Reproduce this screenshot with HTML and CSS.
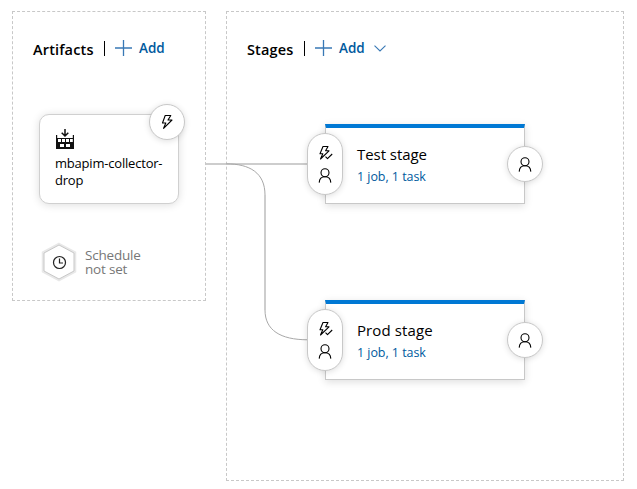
FILE: index.html
```html
<!DOCTYPE html>
<html lang="en">
<head>
<meta charset="utf-8">
<title>Release pipeline</title>
<link rel="stylesheet" href="styles.css">
</head>
<body>
<svg class="symbols" width="0" height="0" aria-hidden="true">
  <symbol id="plus" viewBox="0 0 17 17"><path d="M8.500 0v16M0 8h17" fill="none" stroke="currentColor" stroke-width="1.300"/></symbol>
  <symbol id="bolt" viewBox="0 0 14 16"><path d="M5.200 1.500h5.600L8 6h4L3.600 14.300 5.800 9H2.500z" fill="none" stroke="currentColor" stroke-width="1.100" stroke-linejoin="round"/></symbol>
  <symbol id="bolt-check" viewBox="0 0 15 16"><path d="M5 1.500h5L7.600 5.800H11L2.500 14 4.800 8.800H2zM7.500 11.700l2 2 4.700-4.700" fill="none" stroke="currentColor" stroke-width="1.100" stroke-linejoin="round"/></symbol>
  <symbol id="person" viewBox="0 0 14 15"><circle cx="7" cy="4.700" r="4" fill="none" stroke="currentColor" stroke-width="1.100"/><path d="M1.200 14.600C1.400 11 3.700 8.800 7 8.800s5.600 2.200 5.800 5.800" fill="none" stroke="currentColor" stroke-width="1.100"/></symbol>
</svg>
<main class="pipeline">
  <section class="panel artifacts">
    <header class="panel-header">
      <h2>Artifacts</h2><span class="divider"></span>
      <a class="add"><svg class="plus"><use href="#plus"/></svg><span>Add</span></a>
    </header>
    <article class="artifact">
      <svg class="build" viewBox="0 0 18 20"><path d="M9 0v7M5.700 3.700 9 7l3.300-3.300" fill="none" stroke="#111" stroke-width="1.500"/><path fill="#111" fill-rule="evenodd" d="M0 6h1.200v3h15.600V6H18v14H0zM1.200 10v3h15.600v-3zM4 15v3h4v-3zm6 0v3h4v-3z"/><path fill="#111" d="M5 10h1v3H5zM9 10h1v3H9zM13 10h1v3h-1zM1 10h1v3H1z"/></svg>
      <div class="artifact-name">mbapim-collector-<br>drop</div>
      <span class="round trigger"><svg class="bolt"><use href="#bolt"/></svg></span>
    </article>
    <div class="schedule">
      <svg class="hexagon" viewBox="0 0 36 40"><path d="M18 2 34 10.500v19L18 38 2 29.500v-19z" fill="#fff" stroke="#e8e8e8" stroke-width="2.500"/><path d="M18 3 33 11v18L18 37 3 29V11z" fill="#fff" stroke="#c8c8c8"/><circle cx="18.500" cy="20.500" r="6" fill="none" stroke="#222" stroke-width="1.200"/><path d="M18.500 16.500V21H22" fill="none" stroke="#222" stroke-width="1.200"/></svg>
      <div class="schedule-text">Schedule<br>not set</div>
    </div>
  </section>
  <section class="panel stages">
    <header class="panel-header">
      <h2>Stages</h2><span class="divider"></span>
      <a class="add"><svg class="plus"><use href="#plus"/></svg><span>Add</span><svg class="chevron" viewBox="0 0 12 7"><path d="m.5.7 5.500 5.300L11.500.7" fill="none" stroke="currentColor" stroke-width="1.100"/></svg></a>
    </header>
    <div class="stage-list">
      <article class="stage">
        <h3>Test stage</h3><a class="tasks">1 job, 1 task</a>
        <span class="pre"><svg class="bolt-check"><use href="#bolt-check"/></svg><svg class="person"><use href="#person"/></svg></span>
        <span class="round post"><svg class="person"><use href="#person"/></svg></span>
      </article>
      <article class="stage">
        <h3 class="prod">Prod stage</h3><a class="tasks">1 job, 1 task</a>
        <span class="pre"><svg class="bolt-check"><use href="#bolt-check"/></svg><svg class="person"><use href="#person"/></svg></span>
        <span class="round post"><svg class="person"><use href="#person"/></svg></span>
      </article>
    </div>
  </section>
  <svg class="connectors" viewBox="0 0 637 489" fill="none"><path d="M206 164H308" stroke="#cdcdcd" stroke-width="2"/><path d="M265 195V310" stroke="#cdcdcd" stroke-width="2"/><path d="M226 163.800C250 163.800 265 173 265 195M265 310C265 330 280 339.800 308 339.800" stroke="#a8a8a8"/></svg>
</main>
</body>
</html>
```
FILE: styles.css
```css
* { box-sizing: border-box; }
body { margin: 0; background: #fff; color: #000; font-family: "Open Sans", "Noto Sans", sans-serif; }
h2, h3 { margin: 0; }
svg { display: block; flex: none; }
.symbols { position: absolute; }
.pipeline { position: relative; display: flex; align-items: flex-start; gap: 20px; width: 637px; height: 489px; padding: 11px 13px 8px 12px; overflow: hidden; }
.panel { border: 1px dashed #c8c8c8; }
.artifacts { width: 194px; height: 290px; padding: 28px 20px 0; }
.stages { width: 398px; height: 470px; padding: 28px 20px 0; }
.panel-header { display: flex; height: 18px; white-space: nowrap; }
.panel-header h2 { width: 61px; font-size: 14.5px; line-height: 20px; font-weight: 600; letter-spacing: 0.15px; }
.panel-header { align-items: flex-start; }
.stages .panel-header h2 { width: 47px; }
.divider { flex: none; width: 1px; height: 15px; margin: 1px 10px 0; background: #000; }
.add { display: flex; color: #005a9e; }
.add span { width: 26px; margin-left: 7px; font-size: 13.5px; line-height: 17px; font-weight: 600; }
.plus { width: 17px; height: 17px; color: #3878b5; }
.chevron { width: 12px; height: 7px; margin: 5px 0 0 9px; color: #3878b5; }
.artifact { position: relative; width: 140px; height: 90px; margin: 56px 0 0 6px; padding: 14px 0 0 15px; border: 1px solid #d0d0d0; border-radius: 10px; background: #fff; box-shadow: 0 1px 9px #0002; }
.build { width: 18px; height: 20px; margin-left: 1px; }
.artifact-name { margin-top: 6px; font-size: 13px; line-height: 17px; letter-spacing: -0.2px; white-space: nowrap; }
.round { position: absolute; display: grid; place-items: center; width: 36px; height: 36px; border: 1px solid #c8c8c8; border-radius: 50%; background: #fff; box-shadow: 0 1px 6px #0002; }
.trigger { top: -11px; right: -7px; }
.bolt { width: 14px; height: 16px; }
.schedule { display: flex; margin: 38px 0 0 8px; color: #777; }
.hexagon { width: 36px; height: 40px; }
.schedule-text { margin: 6px 0 0 8px; font-size: 13.5px; line-height: 14px; letter-spacing: -0.2px; white-space: nowrap; }
.stage-list { display: grid; gap: 96px; margin: 66px 0 0 78px; }
.stage { position: relative; width: 200px; height: 80px; padding: 16px 0 0 31px; border: 1px solid #c8c8c8; border-top: 4px solid #0078d4; background: #fff; box-shadow: 0 2px 8px #0002; white-space: nowrap; }
.stage h3 { font-size: 15px; line-height: 20px; font-weight: 400; letter-spacing: -0.05px; }
.stage .prod { letter-spacing: 0.1px; }
.tasks { display: block; margin-top: 4px; color: #005a9e; font-size: 12.5px; line-height: 17px; letter-spacing: -0.05px; }
.pre { position: absolute; z-index: 3; left: -19px; top: 5px; display: flex; flex-direction: column; align-items: center; gap: 7px; width: 36px; height: 62px; padding-top: 11px; border: 1px solid #c8c8c8; border-radius: 18px; background: #fff; box-shadow: 0 1px 6px #0002; }
.bolt-check { width: 15px; height: 16px; }
.person { width: 14px; height: 15px; }
.post { right: -19px; top: 18px; }
.connectors { position: absolute; z-index: 1; inset: 0; width: 637px; height: 489px; pointer-events: none; }
```
